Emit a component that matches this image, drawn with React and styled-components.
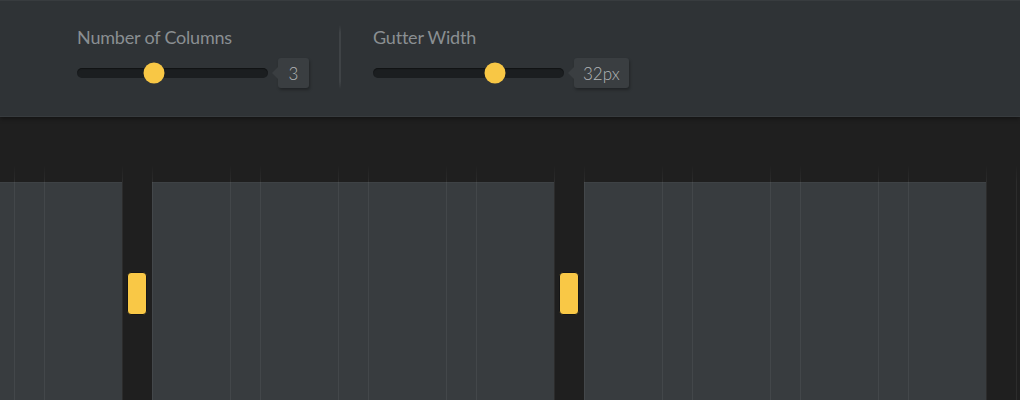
import React from "react";
import styled, { createGlobalStyle } from "styled-components";

const GlobalStyle = createGlobalStyle`
  html, body {
    margin: 0;
    padding: 0;
    background: #1f1f1f;
    font-family: Lato, "Open Sans", sans-serif;
    overflow: hidden;
  }
`;

const Page = styled.div`
  width: 1020px;
  height: 400px;
  background: #1f1f1f;
  overflow: hidden;
`;

const Panel = styled.div`
  height: 117px;
  box-sizing: border-box;
  background: #2f3336;
  border-top: 1px solid #383c3f;
  border-bottom: 1px solid #373b3e;
  box-shadow: 0 2px 4px rgba(0, 0, 0, 0.35);
  display: flex;
  align-items: flex-start;
  padding: 23px 0 0 77px;
  position: relative;
  z-index: 2;
`;

const Control = styled.div`
  display: flex;
  flex-direction: column;
  width: ${(p) => p.width}px;
`;

const Label = styled.div`
  font-size: 18px;
  font-weight: 400;
  color: #8a8f92;
  line-height: 26px;
  letter-spacing: -0.2px;
  white-space: nowrap;
`;

const SliderRow = styled.div`
  display: flex;
  align-items: center;
  margin-top: 8px;
  gap: 10px;
`;

const Track = styled.div`
  position: relative;
  flex: 0 0 191px;
  height: 10px;
  border-radius: 5px;
  background: #1b1e20;
  box-shadow: inset 0 1px 1px rgba(0, 0, 0, 0.4);
`;

const Thumb = styled.div`
  position: absolute;
  top: 50%;
  width: 21px;
  height: 21px;
  border-radius: 50%;
  background: #f8c745;
  transform: translate(-50%, -50%);
`;

const Bubble = styled.div`
  position: relative;
  height: 30px;
  min-width: 31px;
  padding: 0 ${(p) => (p.wide ? "9px" : "0")};
  box-sizing: border-box;
  border-radius: 3px;
  background: #3a3e41;
  color: #b3b6b8;
  font-size: 17px;
  font-weight: 300;
  display: flex;
  align-items: center;
  justify-content: center;
  box-shadow: 1px 2px 3px rgba(0, 0, 0, 0.3);

  &::before {
    content: "";
    position: absolute;
    left: -6px;
    top: 9px;
    border-style: solid;
    border-width: 6px 6px 6px 0;
    border-color: transparent #3a3e41 transparent transparent;
  }
`;

const Divider = styled.div`
  width: 2px;
  height: 64px;
  margin: 1px 32px 0 30px;
  background: linear-gradient(
    to bottom,
    rgba(62, 66, 69, 0) 0%,
    #3f4346 12%,
    #3f4346 88%,
    rgba(62, 66, 69, 0) 100%
  );
`;

const Canvas = styled.div`
  position: relative;
  height: 283px;
  padding-top: 65px;
  box-sizing: border-box;

  &::after {
    content: "";
    position: absolute;
    left: 0;
    right: 0;
    top: 47px;
    bottom: 0;
    pointer-events: none;
    background-image: repeating-linear-gradient(
        to right,
        transparent 0,
        transparent 14px,
        rgba(255, 255, 255, 0.06) 14px,
        rgba(255, 255, 255, 0.06) 15px,
        transparent 15px,
        transparent 44px,
        rgba(255, 255, 255, 0.06) 44px,
        rgba(255, 255, 255, 0.06) 45px,
        transparent 45px,
        transparent 108px
      );
    -webkit-mask-image: linear-gradient(to bottom, transparent 0, #000 18px);
    mask-image: linear-gradient(to bottom, transparent 0, #000 18px);
  }
`;

const Columns = styled.div`
  display: flex;
  height: 100%;
  margin-left: -280px;
`;

const Column = styled.div`
  flex: 0 0 402px;
  background: #383c3f;
  border-top: 1px solid #3e4245;
  box-sizing: border-box;
`;

const Gutter = styled.div`
  flex: 0 0 30px;
  display: flex;
  justify-content: center;
  padding-top: 90px;
`;

const Handle = styled.div`
  width: 20px;
  height: 43px;
  box-sizing: border-box;
  border-radius: 4px;
  border: 1.5px solid #151617;
  background: #f9c846;
`;

const Slider = ({ label, value, percent, wide, width }) => (
  <Control width={width}>
    <Label>{label}</Label>
    <SliderRow>
      <Track>
        <Thumb style={{ left: `${percent}%` }} />
      </Track>
      <Bubble wide={wide}>{value}</Bubble>
    </SliderRow>
  </Control>
);

const App = () => {
  const cols = [0, 1, 2];

  return (
    <Page>
      <GlobalStyle />
      <Panel>
        <Slider label="Number of Columns" value="3" percent={40.5} width={232} />
        <Divider />
        <Slider label="Gutter Width" value="32px" percent={64} wide width={256} />
      </Panel>
      <Canvas>
        <Columns>
          {cols.map((c) => (
            <React.Fragment key={c}>
              <Column />
              {c < cols.length - 1 && (
                <Gutter>
                  <Handle />
                </Gutter>
              )}
            </React.Fragment>
          ))}
        </Columns>
      </Canvas>
    </Page>
  );
};

export default App;
